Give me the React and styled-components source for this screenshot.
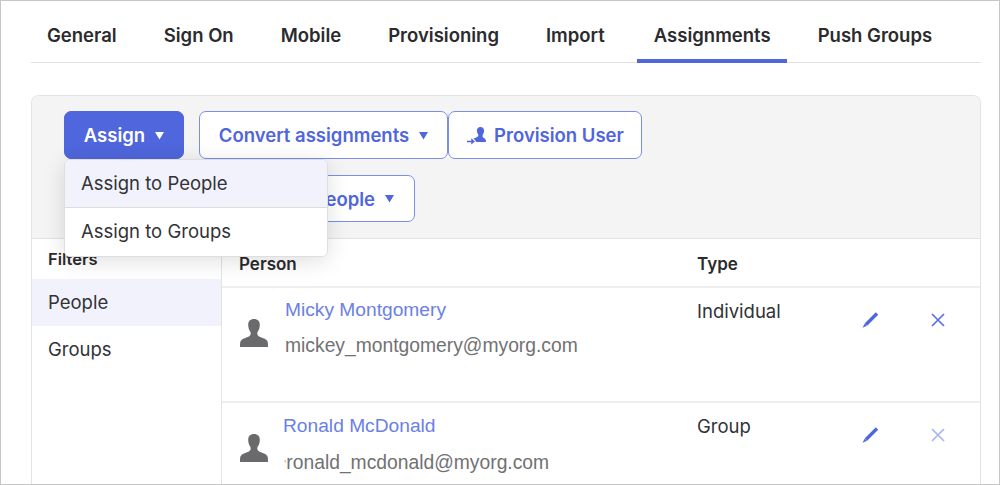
import React from "react";
import styled, { createGlobalStyle } from "styled-components";

const Global = createGlobalStyle`
  html, body { margin: 0; padding: 0; background: #fff; }
  * { box-sizing: border-box; }
  body { font-family: Inter, "Liberation Sans", sans-serif; color: #2b2b2e; }
`;

const Frame = styled.div`
  width: 1000px;
  height: 485px;
  overflow: hidden;
  border: 1px solid #c6c6c6;
  background: #fff;
  padding: 0 18px 0 30px;
  display: flex;
  flex-direction: column;
`;

const Tabs = styled.nav`
  display: flex;
  gap: 15px;
  height: 62px;
  flex: none;
  border-bottom: 1px solid #e1e1e1;
`;

const Tab = styled.div`
  height: 62px;
  margin-left: ${(p) => (p.$active ? 1 : 0)}px;
  padding: 10px 16px 0 ${(p) => (p.$active ? 17 : 16)}px;
  display: flex;
  align-items: center;
  font-size: 18.5px;
  font-weight: 600;
  line-height: 22px;
  border-bottom: 4px solid ${(p) => (p.$active ? "#4f66dc" : "transparent")};
`;

const Panel = styled.section`
  position: relative;
  margin-top: 32px;
  flex: 1;
  display: flex;
  flex-direction: column;
  border: 1px solid #e3e3e3;
  border-bottom: none;
  border-radius: 8px 8px 0 0;
  min-height: 0;
`;

const Toolbar = styled.div`
  flex: none;
  height: 143px;
  background: #f4f4f4;
  border-bottom: 1px solid #e3e3e3;
  border-radius: 8px 8px 0 0;
  padding: 15px 0 0 32px;
  display: flex;
  flex-direction: column;
  gap: 16px;
`;

const ButtonRow = styled.div`
  display: flex;
  align-items: flex-start;
  padding-left: ${(p) => p.$indent || 0}px;
`;

const Button = styled.button`
  height: ${(p) => p.$h || 48}px;
  width: ${(p) => p.$w}px;
  margin-right: ${(p) => p.$mr || 0}px;
  display: flex;
  align-items: center;
  justify-content: ${(p) => (p.$end ? "flex-end" : "center")};
  padding: 0 ${(p) => (p.$end ? 20 : 0)}px 0 0;
  gap: 9px;
  border-radius: 7px;
  border: 1px solid ${(p) => (p.$primary ? "#4f66dc" : "#7b8fe8")};
  background: ${(p) => (p.$primary ? "#4f66dc" : "#fff")};
  color: ${(p) => (p.$primary ? "#fff" : "#4f66dc")};
  font-family: inherit;
  font-size: 18.5px;
  font-weight: 600;
  white-space: nowrap;
`;

const Caret = styled.svg`
  width: 9px;
  height: 9px;
  margin-left: 1px;
  fill: currentColor;
`;

const Menu = styled.div`
  position: absolute;
  left: 32px;
  top: 63px;
  width: 264px;
  height: 98px;
  background: #fff;
  border: 1px solid #dedede;
  border-radius: 6px;
  box-shadow: 0 4px 22px rgba(0, 0, 0, 0.13);
  overflow: hidden;
  z-index: 5;
`;

const MenuItem = styled.div`
  height: 48px;
  padding: 0 16px 2px;
  display: flex;
  align-items: center;
  font-size: 18.5px;
  line-height: 22px;
  color: #323236;
  background: ${(p) => (p.$on ? "#f2f2fc" : "#fff")};
  border-bottom: ${(p) => (p.$on ? "1px solid #dcdcdc" : "none")};
`;

const Body = styled.div`
  flex: 1;
  display: flex;
  min-height: 0;
`;

const Sidebar = styled.aside`
  width: 190px;
  flex: none;
  border-right: 1px solid #e3e3e3;
`;

const SideHead = styled.div`
  height: 40px;
  padding: 10px 16px 0;
  font-size: 16.5px;
  font-weight: 600;
  line-height: 20px;
`;

const SideItem = styled.div`
  height: 47px;
  padding: 0 16px 2px;
  display: flex;
  align-items: center;
  font-size: 18.5px;
  color: #323236;
  background: ${(p) => (p.$on ? "#f2f2fc" : "transparent")};
  &:last-child { height: 48px; }
`;

const Table = styled.div`
  flex: 1;
  min-width: 0;
  display: flex;
  flex-direction: column;
`;

const HeadRow = styled.div`
  height: 49px;
  flex: none;
  display: grid;
  grid-template-columns: 458px 1fr;
  align-items: center;
  padding: 3px 0 0 17px;
  border-bottom: 2px solid #eeeeee;
`;

const HeadCell = styled.div`
  font-size: 17px;
  font-weight: 600;
  line-height: 22px;
`;

const Row = styled.div`
  height: 115px;
  flex: none;
  display: grid;
  grid-template-columns: 458px 164px 68px 1fr;
  padding-left: 17px;
  border-bottom: 2px solid #eeeeee;
`;

const PersonCell = styled.div`
  display: flex;
  align-items: flex-start;
`;

const Avatar = styled.svg`
  width: 28px;
  height: 28px;
  margin: 31px 0 0 1px;
  flex: none;
  fill: #6a6a6c;
`;

const PersonText = styled.div`
  margin-left: ${(p) => p.$ml}px;
  font-family: "Liberation Sans", Arial, sans-serif;
`;

const PersonName = styled.div`
  margin-top: ${(p) => p.$top}px;
  font-size: 19.2px;
  line-height: 22px;
  color: #6a80e4;
`;

const PersonMail = styled.div`
  margin-top: ${(p) => p.$gap}px;
  margin-left: ${(p) => p.$ml}px;
  font-size: 19.3px;
  line-height: 24px;
  color: #717173;
`;

const Tick = styled.span`
  color: #b4b4b4;
  font-size: 12px;
`;

const TypeCell = styled.div`
  padding-top: 12px;
  font-size: 18.5px;
  line-height: 22px;
  color: #323236;
`;

const IconCell = styled.div`
  padding-top: 23px;
  color: ${(p) => p.$color};
`;

const Glyph = styled.svg`
  display: block;
  width: 18px;
  height: 18px;
  fill: none;
  stroke: currentColor;
`;

const Person = () => (
  <Avatar viewBox="0 0 28 28">
    <path d="M14 0c-3.800 0-5.800 2.200-5.800 5.800 0 3 .8 5.200 2.100 7 .6.900.5 2.300 0 3.300-.7 1.400-2.600 2.100-5 3C2.400 20.200.500 21.400.2 23.300.100 24.800 0 26 0 28h28c0-2-.1-3.200-.2-4.700-.3-1.900-2.200-3.100-5.100-4.200-2.400-.9-4.300-1.600-5-3-.5-1-.6-2.400 0-3.300 1.300-1.800 2.100-4 2.100-7C19.800 2.200 17.800 0 14 0z" />
  </Avatar>
);

const Pencil = () => (
  <Glyph viewBox="0 0 18 18">
    <path d="M16 2.500 L5 13.500" strokeWidth="3.400" />
    <path d="M3.800 12.500 L1.500 16.800 L6 14.800 Z" fill="currentColor" stroke="none" />
  </Glyph>
);

const Cross = () => (
  <Glyph viewBox="0 0 18 18">
    <path d="M3 3 L15 15 M15 3 L3 15" strokeWidth="1.700" />
  </Glyph>
);

const Arrow = () => (
  <Caret viewBox="0 0 10 10">
    <path d="M0 1.200h10L5 9.400z" />
  </Caret>
);

const ProvisionIcon = styled.svg`
  width: 20px;
  height: 20px;
  margin-right: -1px;
  fill: currentColor;
`;

export default function App() {
  return (
    <>
      <Global />
      <Frame>
        <Tabs>
          <Tab>General</Tab>
          <Tab>Sign On</Tab>
          <Tab>Mobile</Tab>
          <Tab>Provisioning</Tab>
          <Tab>Import</Tab>
          <Tab $active>Assignments</Tab>
          <Tab>Push Groups</Tab>
        </Tabs>
        <Panel>
          <Toolbar>
            <ButtonRow>
              <Button $primary $w={120} $mr={15}>Assign <Arrow /></Button>
              <Button $w={249}>Convert assignments <Arrow /></Button>
              <Button $w={194}>
                <ProvisionIcon viewBox="0 0 20 20">
                  <path d="M14.5 2 C12.3 2 10.9 3.5 10.9 5.6 C10.9 7.1 11.4 8.4 12.1 9.3 C12.4 9.8 12.4 10.5 12.1 11.1 C11.6 12.1 10 12.8 7.5 13.6 L9.8 16 V17 H20 C20.2 15.3 19.4 14 17.9 13.1 C16.8 12.4 16.5 11.8 16.6 11 C16.6 10.4 16.7 9.8 17 9.3 C17.7 8.4 18.1 7.1 18.1 5.6 C18.1 3.5 16.7 2 14.5 2 Z" />
                  <path d="M1 15.700h4.300v-2.400l3.600 3.100-3.600 3.100v-2.300H1z" />
                </ProvisionIcon>
                Provision User
              </Button>
            </ButtonRow>
            <ButtonRow $indent={135}>
              <Button $w={216} $h={47} $end>People <Arrow /></Button>
            </ButtonRow>
          </Toolbar>
          <Menu>
            <MenuItem $on>Assign to People</MenuItem>
            <MenuItem>Assign to Groups</MenuItem>
          </Menu>
          <Body>
            <Sidebar>
              <SideHead>Filters</SideHead>
              <SideItem $on>People</SideItem>
              <SideItem>Groups</SideItem>
            </Sidebar>
            <Table>
              <HeadRow>
                <HeadCell>Person</HeadCell>
                <HeadCell>Type</HeadCell>
              </HeadRow>
              <Row>
                <PersonCell>
                  <Person />
                  <PersonText $ml={17}>
                    <PersonName $top={11}>Micky Montgomery</PersonName>
                    <PersonMail $gap={13} $ml={0}>mickey_montgomery@myorg.com</PersonMail>
                  </PersonText>
                </PersonCell>
                <TypeCell>Individual</TypeCell>
                <IconCell $color="#4f66dc"><Pencil /></IconCell>
                <IconCell $color="#5a70e0"><Cross /></IconCell>
              </Row>
              <Row>
                <PersonCell>
                  <Person />
                  <PersonText $ml={15}>
                    <PersonName $top={12}>Ronald McDonald</PersonName>
                    <PersonMail $gap={14} $ml={1}><Tick>'</Tick>ronald_mcdonald@myorg.com</PersonMail>
                  </PersonText>
                </PersonCell>
                <TypeCell>Group</TypeCell>
                <IconCell $color="#4f66dc"><Pencil /></IconCell>
                <IconCell $color="#a9b5ef"><Cross /></IconCell>
              </Row>
            </Table>
          </Body>
        </Panel>
      </Frame>
    </>
  );
}
